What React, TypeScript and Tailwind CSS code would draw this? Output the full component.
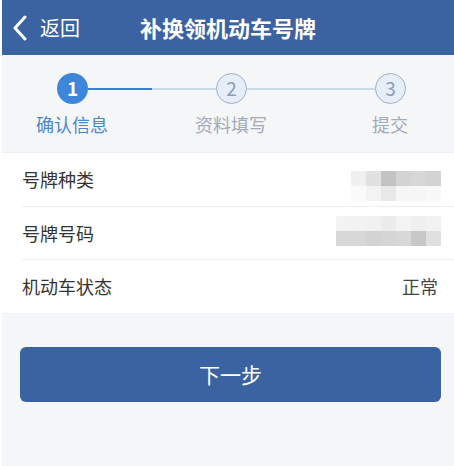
const font = { fontFamily: '"Noto Sans CJK SC", "Noto Sans", sans-serif' }

const steps = [
  { n: 1, label: "确认信息", active: true },
  { n: 2, label: "资料填写", active: false },
  { n: 3, label: "提交", active: false },
]

const mosaicA = [
  ["#f0f0f0", "#e1e1e1", "#c3c3c3", "#d3d3d3", "#d7d7d7", "#d3d3d3"],
  ["#fafafa", "#f3f3f3", "#e8e8e8", "#f6f6f6", "#f6f6f6", "#f8f8f8"],
]

const mosaicB = [
  ["#f3f3f3", "#f2f2f2", "#f1f1f1", "#ececec", "#f3f3f3", "#efefef", "#f2f2f2"],
  ["#d8d8d8", "#d8d8d8", "#d3d3d3", "#d6d6d6", "#d8d8d8", "#c8c8c8", "#e0e0e0"],
]

function Mosaic({ cells }: { cells: string[][] }) {
  return (
    <div className="flex flex-col">
      {cells.map((row, i) => (
        <div key={i} className="flex">
          {row.map((c, j) => (
            <div key={j} className="h-[15px] w-[15px]" style={{ backgroundColor: c }} />
          ))}
        </div>
      ))}
    </div>
  )
}

function Circle({ n, active }: { n: number; active: boolean }) {
  return active ? (
    <div className="flex h-[31px] w-[31px] shrink-0 items-center justify-center rounded-full bg-[#3d86d9] text-[19px] font-semibold text-white">
      {n}
    </div>
  ) : (
    <div className="flex h-[31px] w-[31px] shrink-0 items-center justify-center rounded-full border border-[#9eb0c6] bg-[#e6eef9] text-[19px] text-[#8c9db3]">
      {n}
    </div>
  )
}

export default function App() {
  return (
    <div className="min-h-[466px] border-l-2 border-white bg-[#f5f6f8]" style={font}>
      {/* header */}
      <div className="relative flex h-[55px] items-center bg-[#3b62a1] text-white">
        <div className="flex items-center pl-[10px]">
          <svg width="16" height="26" viewBox="0 0 16 26" fill="none">
            <polyline
              points="13,2 3,13 13,24"
              stroke="white"
              strokeWidth="3"
              strokeLinecap="round"
              strokeLinejoin="round"
            />
          </svg>
          <span className="ml-[12px] text-[20px]">返回</span>
        </div>
        <div className="absolute inset-x-0 text-center text-[22px] font-bold">补换领机动车号牌</div>
      </div>

      {/* stepper */}
      <div className="h-[98px] border-b border-[#edf0f4] pt-[18px]">
        <div className="flex items-center pl-[55px] pr-[48px]">
          <Circle n={1} active />
          <div className="flex flex-1">
            <div className="h-[2px] flex-1 bg-[#3b80d2]" />
            <div className="h-[2px] flex-1 bg-[#cad8ea]" />
          </div>
          <Circle n={2} active={false} />
          <div className="h-[2px] flex-1 bg-[#cad8ea]" />
          <Circle n={3} active={false} />
        </div>
        <div className="mt-[8px] flex justify-between pl-[20px] pr-[14px]">
          {steps.map((s) => (
            <div
              key={s.n}
              className={`w-[100px] text-center text-[18px] leading-[24px] ${s.active ? "text-[#4a88cc]" : "text-[#a3abb6]"}`}
            >
              {s.label}
            </div>
          ))}
        </div>
      </div>

      {/* info list */}
      <div className="border-b border-[#edeff2] bg-white pl-[20px] text-[18px] text-[#333333]">
        <div className="flex h-[54px] items-center justify-between border-b border-[#eeeeee] pr-[13px]">
          <span>号牌种类</span>
          <div className="mt-[12px]">
            <Mosaic cells={mosaicA} />
          </div>
        </div>
        <div className="flex h-[53px] items-center justify-between border-b border-[#eeeeee] pr-[13px]">
          <span>号牌号码</span>
          <div className="-mt-[4px]">
            <Mosaic cells={mosaicB} />
          </div>
        </div>
        <div className="flex h-[53px] items-center justify-between pr-[13px]">
          <span>机动车状态</span>
          <span className="mr-[3px] text-[#444444]">正常</span>
        </div>
      </div>

      {/* action */}
      <div className="pl-[18px] pr-[13px] pt-[33px]">
        <button className="flex h-[55px] w-full items-center justify-center rounded-[6px] bg-[#3b63a2] text-[21px] text-white">
          下一步
        </button>
      </div>
    </div>
  )
}
